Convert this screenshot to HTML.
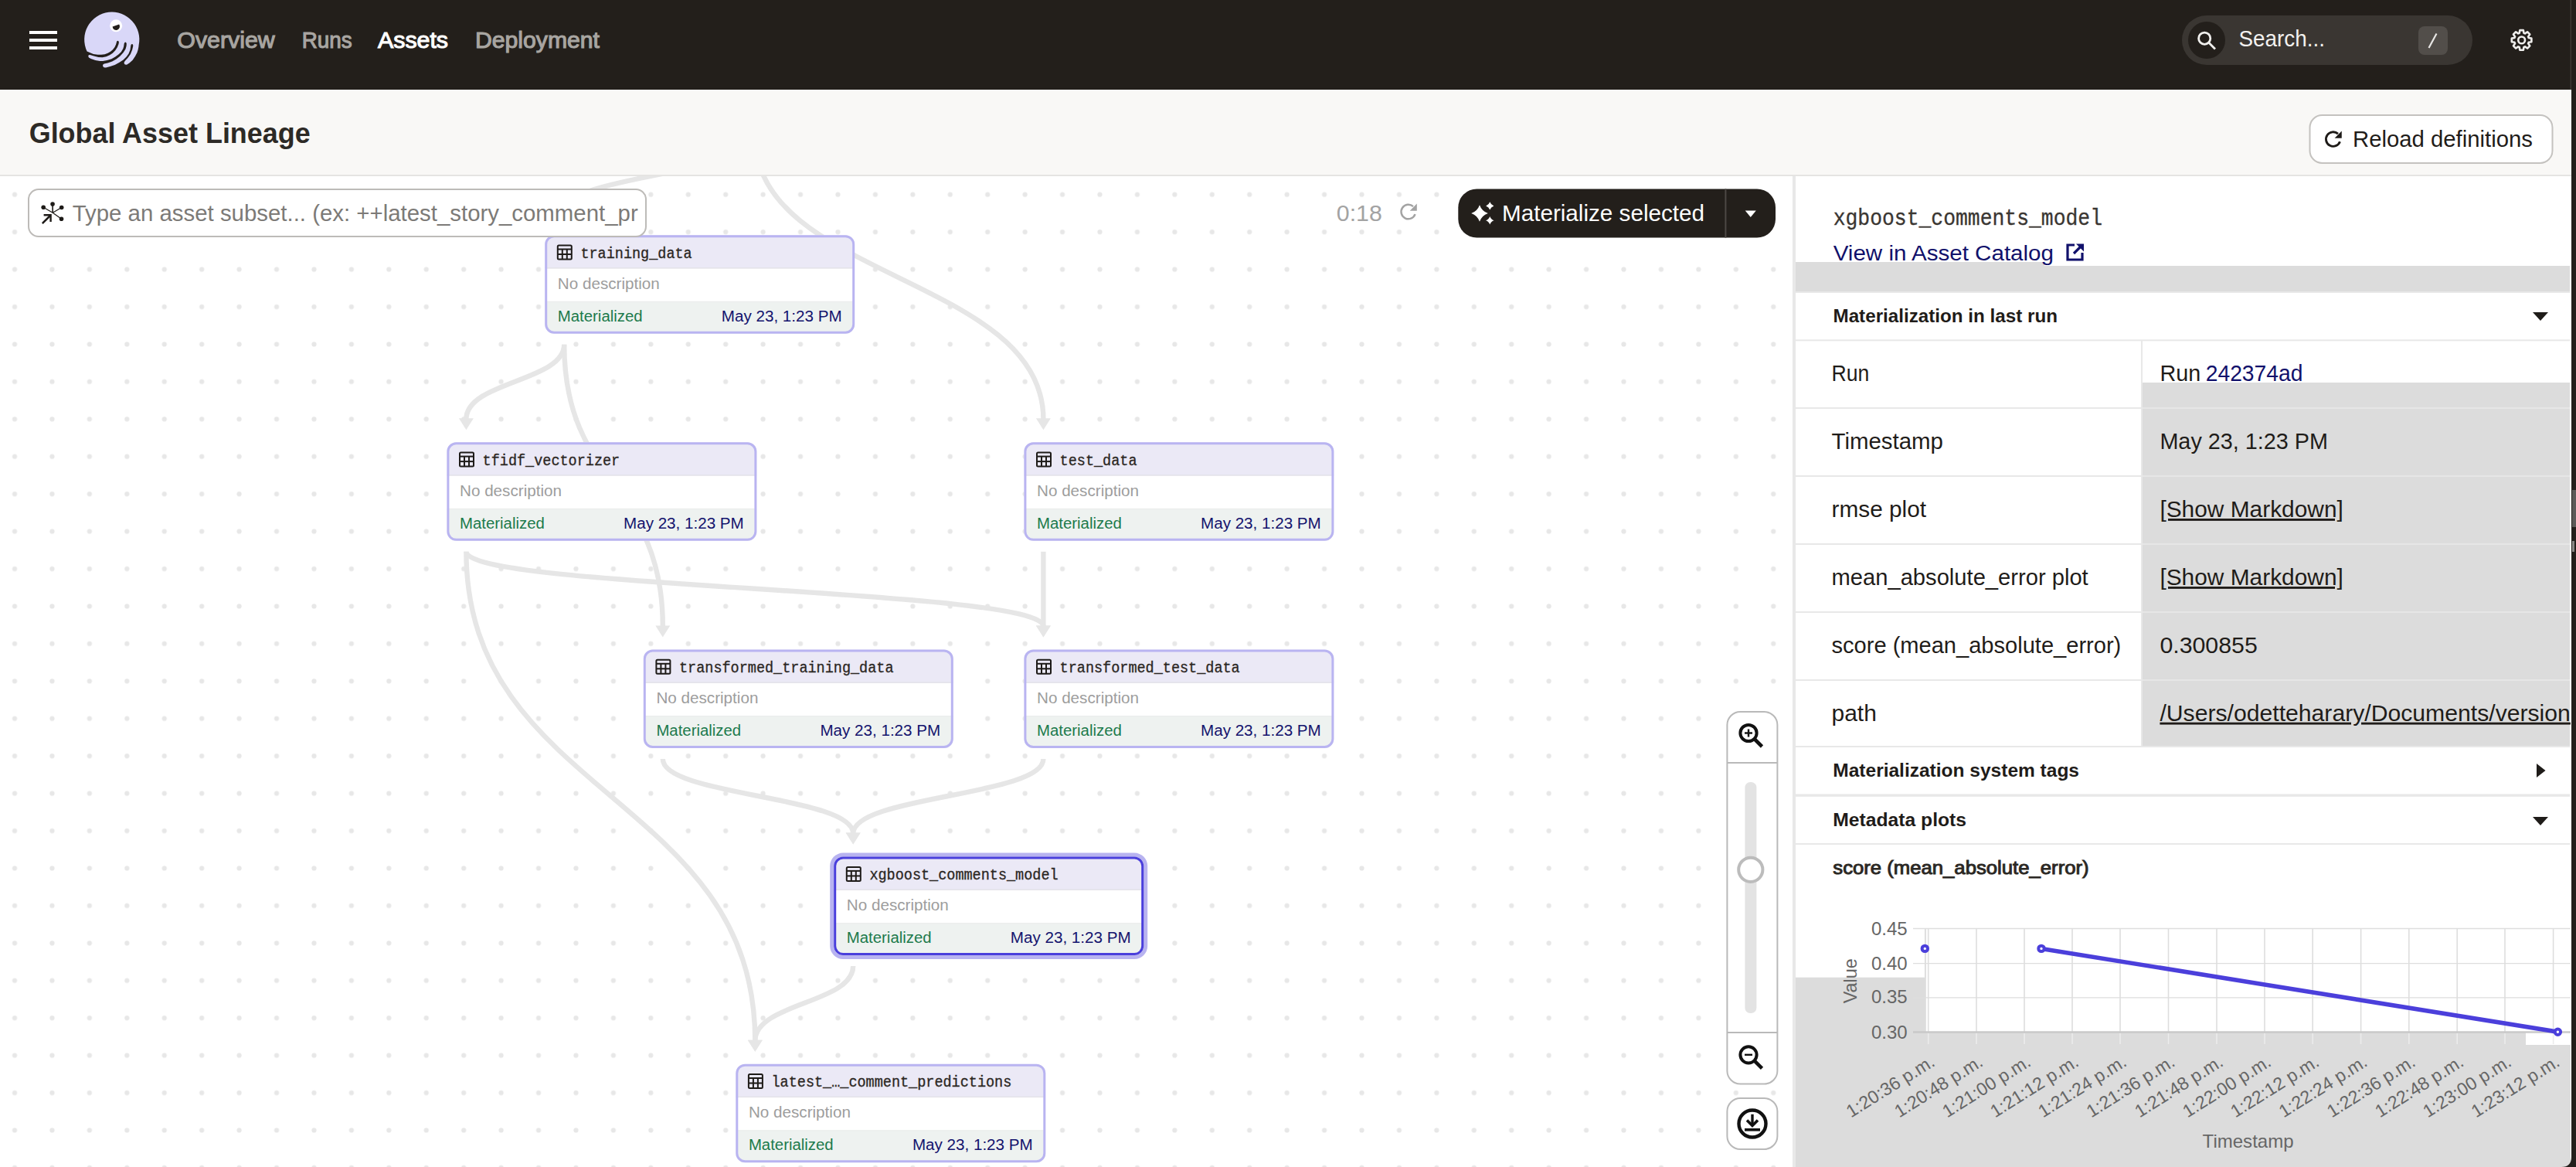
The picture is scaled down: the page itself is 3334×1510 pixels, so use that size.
<!DOCTYPE html><html><head><meta charset="utf-8"><title>Global Asset Lineage</title>
<style>html,body{margin:0;padding:0;background:#fff;overflow:hidden;width:3334px;height:1510px}svg{display:block}text{white-space:pre}</style></head><body>
<svg width="3334" height="1510" viewBox="0 0 3334 1510">
<defs>
<pattern id="dots" patternUnits="userSpaceOnUse" x="-5.2" y="227.6" width="48.43" height="48.43"><circle cx="24.2" cy="24.2" r="3.1" fill="#e7e7e7"/></pattern>
</defs>
<rect x="0.00" y="228.00" width="2320.00" height="1282.00" rx="0" fill="#ffffff" />
<rect x="0.00" y="228.00" width="2320.00" height="1282.00" rx="0" fill="url(#dots)" />
<path d="M977.3,177.6 C977.3,225.4 730.2,225.4 730.2,274.2" fill="none" stroke="#e6e6e6" stroke-width="6.4"/>
<path d="M720.7,273.2 L739.7,273.2 L730.2,288.2 Z" fill="#e6e6e6"/>
<path d="M977.3,177.6 C977.3,359.4 1350.4,359.4 1350.4,542.3" fill="none" stroke="#e6e6e6" stroke-width="6.4"/>
<path d="M1340.9,541.3 L1359.9,541.3 L1350.4,556.3 Z" fill="#e6e6e6"/>
<path d="M730.2,445.7 C730.2,493.5 603.4,493.5 603.4,542.3" fill="none" stroke="#e6e6e6" stroke-width="6.4"/>
<path d="M593.9,541.3 L612.9,541.3 L603.4,556.3 Z" fill="#e6e6e6"/>
<path d="M730.2,445.7 C730.2,627.6 857.8,627.6 857.8,810.5" fill="none" stroke="#e6e6e6" stroke-width="6.4"/>
<path d="M848.3,809.5 L867.3,809.5 L857.8,824.5 Z" fill="#e6e6e6"/>
<path d="M603.4,713.8 C603.4,761.6 1350.4,761.6 1350.4,810.5" fill="none" stroke="#e6e6e6" stroke-width="6.4"/>
<path d="M1340.9,809.5 L1359.9,809.5 L1350.4,824.5 Z" fill="#e6e6e6"/>
<path d="M603.4,713.8 C603.4,1029.8 977.3,1029.8 977.3,1346.7" fill="none" stroke="#e6e6e6" stroke-width="6.4"/>
<path d="M967.8,1345.7 L986.8,1345.7 L977.3,1360.7 Z" fill="#e6e6e6"/>
<path d="M1350.4,713.8 C1350.4,761.6 1350.4,761.6 1350.4,810.5" fill="none" stroke="#e6e6e6" stroke-width="6.4"/>
<path d="M1340.9,809.5 L1359.9,809.5 L1350.4,824.5 Z" fill="#e6e6e6"/>
<path d="M857.8,982.0 C857.8,1029.8 1104.2,1029.8 1104.2,1078.6" fill="none" stroke="#e6e6e6" stroke-width="6.4"/>
<path d="M1094.7,1077.6 L1113.7,1077.6 L1104.2,1092.6 Z" fill="#e6e6e6"/>
<path d="M1350.4,982.0 C1350.4,1029.8 1104.2,1029.8 1104.2,1078.6" fill="none" stroke="#e6e6e6" stroke-width="6.4"/>
<path d="M1094.7,1077.6 L1113.7,1077.6 L1104.2,1092.6 Z" fill="#e6e6e6"/>
<path d="M1104.2,1250.1 C1104.2,1297.9 977.3,1297.9 977.3,1346.7" fill="none" stroke="#e6e6e6" stroke-width="6.4"/>
<path d="M967.8,1345.7 L986.8,1345.7 L977.3,1360.7 Z" fill="#e6e6e6"/>
<clipPath id="nc1"><rect x="705.2" y="304.2" width="401" height="127.5" rx="12"/></clipPath>
<g clip-path="url(#nc1)">
<rect x="705.20" y="304.20" width="401.00" height="127.50" rx="0" fill="#ffffff" />
<rect x="705.20" y="304.20" width="401.00" height="43.00" rx="0" fill="#ebe9f6" />
<rect x="705.20" y="346.00" width="401.00" height="1.60" rx="0" fill="#e4e3ea" />
<rect x="705.20" y="390.20" width="401.00" height="41.50" rx="0" fill="#eef2f0" />
<rect x="705.20" y="389.80" width="401.00" height="1.00" rx="0" fill="#e9ecea" />
</g>
<rect x="706.7" y="305.7" width="398" height="124.5" rx="10.5" fill="none" stroke="#b9b4f1" stroke-width="3"/>
<g fill="none" stroke="#1e1b18" stroke-width="2"><rect x="721.8" y="317.5" width="18" height="18" rx="1.5"/><line x1="721.8" y1="322.5" x2="739.8" y2="322.5"/><line x1="721.8" y1="329.0" x2="739.8" y2="329.0"/><line x1="727.8" y1="322.5" x2="727.8" y2="335.5"/><line x1="733.8" y1="322.5" x2="733.8" y2="335.5"/></g>
<text x="751.4" y="333.8" font-family="Liberation Mono" font-size="18.50" font-weight="normal" fill="#2b2723" text-anchor="start" textLength="144.3" lengthAdjust="spacingAndGlyphs"  transform="matrix(1 0 0 1.13 0 -43.394)" stroke="#2b2723" stroke-width="0.3">training_data</text>
<text x="721.8" y="373.9" font-family="Liberation Sans" font-size="19.60" font-weight="normal" fill="#9d9d9d" text-anchor="start" textLength="132.0" lengthAdjust="spacingAndGlyphs" >No description</text>
<text x="721.8" y="415.7" font-family="Liberation Sans" font-size="19.60" font-weight="normal" fill="#1c7a4c" text-anchor="start" textLength="109.8" lengthAdjust="spacingAndGlyphs" >Materialized</text>
<text x="933.8" y="415.7" font-family="Liberation Sans" font-size="19.60" font-weight="normal" fill="#14146e" text-anchor="start" textLength="155.8" lengthAdjust="spacingAndGlyphs" >May 23, 1:23 PM</text>
<clipPath id="nc2"><rect x="578.4" y="572.3" width="401" height="127.5" rx="12"/></clipPath>
<g clip-path="url(#nc2)">
<rect x="578.40" y="572.30" width="401.00" height="127.50" rx="0" fill="#ffffff" />
<rect x="578.40" y="572.30" width="401.00" height="43.00" rx="0" fill="#ebe9f6" />
<rect x="578.40" y="614.10" width="401.00" height="1.60" rx="0" fill="#e4e3ea" />
<rect x="578.40" y="658.30" width="401.00" height="41.50" rx="0" fill="#eef2f0" />
<rect x="578.40" y="657.90" width="401.00" height="1.00" rx="0" fill="#e9ecea" />
</g>
<rect x="579.9" y="573.8" width="398" height="124.5" rx="10.5" fill="none" stroke="#b9b4f1" stroke-width="3"/>
<g fill="none" stroke="#1e1b18" stroke-width="2"><rect x="595.0" y="585.6" width="18" height="18" rx="1.5"/><line x1="595.0" y1="590.6" x2="613.0" y2="590.6"/><line x1="595.0" y1="597.1" x2="613.0" y2="597.1"/><line x1="601.0" y1="590.6" x2="601.0" y2="603.6"/><line x1="607.0" y1="590.6" x2="607.0" y2="603.6"/></g>
<text x="624.6" y="601.9" font-family="Liberation Mono" font-size="18.50" font-weight="normal" fill="#2b2723" text-anchor="start" textLength="177.6" lengthAdjust="spacingAndGlyphs"  transform="matrix(1 0 0 1.13 0 -78.247)" stroke="#2b2723" stroke-width="0.3">tfidf_vectorizer</text>
<text x="595.0" y="642.0" font-family="Liberation Sans" font-size="19.60" font-weight="normal" fill="#9d9d9d" text-anchor="start" textLength="132.0" lengthAdjust="spacingAndGlyphs" >No description</text>
<text x="595.0" y="683.8" font-family="Liberation Sans" font-size="19.60" font-weight="normal" fill="#1c7a4c" text-anchor="start" textLength="109.8" lengthAdjust="spacingAndGlyphs" >Materialized</text>
<text x="807.0" y="683.8" font-family="Liberation Sans" font-size="19.60" font-weight="normal" fill="#14146e" text-anchor="start" textLength="155.8" lengthAdjust="spacingAndGlyphs" >May 23, 1:23 PM</text>
<clipPath id="nc3"><rect x="1325.4" y="572.3" width="401" height="127.5" rx="12"/></clipPath>
<g clip-path="url(#nc3)">
<rect x="1325.40" y="572.30" width="401.00" height="127.50" rx="0" fill="#ffffff" />
<rect x="1325.40" y="572.30" width="401.00" height="43.00" rx="0" fill="#ebe9f6" />
<rect x="1325.40" y="614.10" width="401.00" height="1.60" rx="0" fill="#e4e3ea" />
<rect x="1325.40" y="658.30" width="401.00" height="41.50" rx="0" fill="#eef2f0" />
<rect x="1325.40" y="657.90" width="401.00" height="1.00" rx="0" fill="#e9ecea" />
</g>
<rect x="1326.9" y="573.8" width="398" height="124.5" rx="10.5" fill="none" stroke="#b9b4f1" stroke-width="3"/>
<g fill="none" stroke="#1e1b18" stroke-width="2"><rect x="1342.0" y="585.6" width="18" height="18" rx="1.5"/><line x1="1342.0" y1="590.6" x2="1360.0" y2="590.6"/><line x1="1342.0" y1="597.1" x2="1360.0" y2="597.1"/><line x1="1348.0" y1="590.6" x2="1348.0" y2="603.6"/><line x1="1354.0" y1="590.6" x2="1354.0" y2="603.6"/></g>
<text x="1371.6" y="601.9" font-family="Liberation Mono" font-size="18.50" font-weight="normal" fill="#2b2723" text-anchor="start" textLength="99.9" lengthAdjust="spacingAndGlyphs"  transform="matrix(1 0 0 1.13 0 -78.247)" stroke="#2b2723" stroke-width="0.3">test_data</text>
<text x="1342.0" y="642.0" font-family="Liberation Sans" font-size="19.60" font-weight="normal" fill="#9d9d9d" text-anchor="start" textLength="132.0" lengthAdjust="spacingAndGlyphs" >No description</text>
<text x="1342.0" y="683.8" font-family="Liberation Sans" font-size="19.60" font-weight="normal" fill="#1c7a4c" text-anchor="start" textLength="109.8" lengthAdjust="spacingAndGlyphs" >Materialized</text>
<text x="1554.0" y="683.8" font-family="Liberation Sans" font-size="19.60" font-weight="normal" fill="#14146e" text-anchor="start" textLength="155.8" lengthAdjust="spacingAndGlyphs" >May 23, 1:23 PM</text>
<clipPath id="nc4"><rect x="832.8" y="840.5" width="401" height="127.5" rx="12"/></clipPath>
<g clip-path="url(#nc4)">
<rect x="832.80" y="840.50" width="401.00" height="127.50" rx="0" fill="#ffffff" />
<rect x="832.80" y="840.50" width="401.00" height="43.00" rx="0" fill="#ebe9f6" />
<rect x="832.80" y="882.30" width="401.00" height="1.60" rx="0" fill="#e4e3ea" />
<rect x="832.80" y="926.50" width="401.00" height="41.50" rx="0" fill="#eef2f0" />
<rect x="832.80" y="926.10" width="401.00" height="1.00" rx="0" fill="#e9ecea" />
</g>
<rect x="834.3" y="842.0" width="398" height="124.5" rx="10.5" fill="none" stroke="#b9b4f1" stroke-width="3"/>
<g fill="none" stroke="#1e1b18" stroke-width="2"><rect x="849.4" y="853.8" width="18" height="18" rx="1.5"/><line x1="849.4" y1="858.8" x2="867.4" y2="858.8"/><line x1="849.4" y1="865.3" x2="867.4" y2="865.3"/><line x1="855.4" y1="858.8" x2="855.4" y2="871.8"/><line x1="861.4" y1="858.8" x2="861.4" y2="871.8"/></g>
<text x="879.0" y="870.1" font-family="Liberation Mono" font-size="18.50" font-weight="normal" fill="#2b2723" text-anchor="start" textLength="277.5" lengthAdjust="spacingAndGlyphs"  transform="matrix(1 0 0 1.13 0 -113.113)" stroke="#2b2723" stroke-width="0.3">transformed_training_data</text>
<text x="849.4" y="910.2" font-family="Liberation Sans" font-size="19.60" font-weight="normal" fill="#9d9d9d" text-anchor="start" textLength="132.0" lengthAdjust="spacingAndGlyphs" >No description</text>
<text x="849.4" y="952.0" font-family="Liberation Sans" font-size="19.60" font-weight="normal" fill="#1c7a4c" text-anchor="start" textLength="109.8" lengthAdjust="spacingAndGlyphs" >Materialized</text>
<text x="1061.4" y="952.0" font-family="Liberation Sans" font-size="19.60" font-weight="normal" fill="#14146e" text-anchor="start" textLength="155.8" lengthAdjust="spacingAndGlyphs" >May 23, 1:23 PM</text>
<clipPath id="nc5"><rect x="1325.4" y="840.5" width="401" height="127.5" rx="12"/></clipPath>
<g clip-path="url(#nc5)">
<rect x="1325.40" y="840.50" width="401.00" height="127.50" rx="0" fill="#ffffff" />
<rect x="1325.40" y="840.50" width="401.00" height="43.00" rx="0" fill="#ebe9f6" />
<rect x="1325.40" y="882.30" width="401.00" height="1.60" rx="0" fill="#e4e3ea" />
<rect x="1325.40" y="926.50" width="401.00" height="41.50" rx="0" fill="#eef2f0" />
<rect x="1325.40" y="926.10" width="401.00" height="1.00" rx="0" fill="#e9ecea" />
</g>
<rect x="1326.9" y="842.0" width="398" height="124.5" rx="10.5" fill="none" stroke="#b9b4f1" stroke-width="3"/>
<g fill="none" stroke="#1e1b18" stroke-width="2"><rect x="1342.0" y="853.8" width="18" height="18" rx="1.5"/><line x1="1342.0" y1="858.8" x2="1360.0" y2="858.8"/><line x1="1342.0" y1="865.3" x2="1360.0" y2="865.3"/><line x1="1348.0" y1="858.8" x2="1348.0" y2="871.8"/><line x1="1354.0" y1="858.8" x2="1354.0" y2="871.8"/></g>
<text x="1371.6" y="870.1" font-family="Liberation Mono" font-size="18.50" font-weight="normal" fill="#2b2723" text-anchor="start" textLength="233.1" lengthAdjust="spacingAndGlyphs"  transform="matrix(1 0 0 1.13 0 -113.113)" stroke="#2b2723" stroke-width="0.3">transformed_test_data</text>
<text x="1342.0" y="910.2" font-family="Liberation Sans" font-size="19.60" font-weight="normal" fill="#9d9d9d" text-anchor="start" textLength="132.0" lengthAdjust="spacingAndGlyphs" >No description</text>
<text x="1342.0" y="952.0" font-family="Liberation Sans" font-size="19.60" font-weight="normal" fill="#1c7a4c" text-anchor="start" textLength="109.8" lengthAdjust="spacingAndGlyphs" >Materialized</text>
<text x="1554.0" y="952.0" font-family="Liberation Sans" font-size="19.60" font-weight="normal" fill="#14146e" text-anchor="start" textLength="155.8" lengthAdjust="spacingAndGlyphs" >May 23, 1:23 PM</text>
<clipPath id="nc6"><rect x="1079.2" y="1108.6" width="401" height="127.5" rx="12"/></clipPath>
<rect x="1074.2" y="1103.6" width="411" height="137.5" rx="17" fill="#b8b3f0"/>
<g clip-path="url(#nc6)">
<rect x="1079.20" y="1108.60" width="401.00" height="127.50" rx="0" fill="#ffffff" />
<rect x="1079.20" y="1108.60" width="401.00" height="43.00" rx="0" fill="#ebe9f6" />
<rect x="1079.20" y="1150.40" width="401.00" height="1.60" rx="0" fill="#e4e3ea" />
<rect x="1079.20" y="1194.60" width="401.00" height="41.50" rx="0" fill="#eef2f0" />
<rect x="1079.20" y="1194.20" width="401.00" height="1.00" rx="0" fill="#e9ecea" />
</g>
<rect x="1080.7" y="1110.1" width="398" height="124.5" rx="10.5" fill="none" stroke="#4a3fdc" stroke-width="3"/>
<g fill="none" stroke="#1e1b18" stroke-width="2"><rect x="1095.8" y="1121.9" width="18" height="18" rx="1.5"/><line x1="1095.8" y1="1126.9" x2="1113.8" y2="1126.9"/><line x1="1095.8" y1="1133.4" x2="1113.8" y2="1133.4"/><line x1="1101.8" y1="1126.9" x2="1101.8" y2="1139.9"/><line x1="1107.8" y1="1126.9" x2="1107.8" y2="1139.9"/></g>
<text x="1125.4" y="1138.2" font-family="Liberation Mono" font-size="18.50" font-weight="normal" fill="#2b2723" text-anchor="start" textLength="244.2" lengthAdjust="spacingAndGlyphs"  transform="matrix(1 0 0 1.13 0 -147.966)" stroke="#2b2723" stroke-width="0.3">xgboost_comments_model</text>
<text x="1095.8" y="1178.3" font-family="Liberation Sans" font-size="19.60" font-weight="normal" fill="#9d9d9d" text-anchor="start" textLength="132.0" lengthAdjust="spacingAndGlyphs" >No description</text>
<text x="1095.8" y="1220.1" font-family="Liberation Sans" font-size="19.60" font-weight="normal" fill="#1c7a4c" text-anchor="start" textLength="109.8" lengthAdjust="spacingAndGlyphs" >Materialized</text>
<text x="1307.8" y="1220.1" font-family="Liberation Sans" font-size="19.60" font-weight="normal" fill="#14146e" text-anchor="start" textLength="155.8" lengthAdjust="spacingAndGlyphs" >May 23, 1:23 PM</text>
<clipPath id="nc7"><rect x="952.3" y="1376.7" width="401" height="127.5" rx="12"/></clipPath>
<g clip-path="url(#nc7)">
<rect x="952.30" y="1376.70" width="401.00" height="127.50" rx="0" fill="#ffffff" />
<rect x="952.30" y="1376.70" width="401.00" height="43.00" rx="0" fill="#ebe9f6" />
<rect x="952.30" y="1418.50" width="401.00" height="1.60" rx="0" fill="#e4e3ea" />
<rect x="952.30" y="1462.70" width="401.00" height="41.50" rx="0" fill="#eef2f0" />
<rect x="952.30" y="1462.30" width="401.00" height="1.00" rx="0" fill="#e9ecea" />
</g>
<rect x="953.8" y="1378.2" width="398" height="124.5" rx="10.5" fill="none" stroke="#b9b4f1" stroke-width="3"/>
<g fill="none" stroke="#1e1b18" stroke-width="2"><rect x="968.9" y="1390.0" width="18" height="18" rx="1.5"/><line x1="968.9" y1="1395.0" x2="986.9" y2="1395.0"/><line x1="968.9" y1="1401.5" x2="986.9" y2="1401.5"/><line x1="974.9" y1="1395.0" x2="974.9" y2="1408.0"/><line x1="980.9" y1="1395.0" x2="980.9" y2="1408.0"/></g>
<text x="998.5" y="1406.3" font-family="Liberation Mono" font-size="18.50" font-weight="normal" fill="#2b2723" text-anchor="start" textLength="310.8" lengthAdjust="spacingAndGlyphs"  transform="matrix(1 0 0 1.13 0 -182.819)" stroke="#2b2723" stroke-width="0.3">latest_…_comment_predictions</text>
<text x="968.9" y="1446.4" font-family="Liberation Sans" font-size="19.60" font-weight="normal" fill="#9d9d9d" text-anchor="start" textLength="132.0" lengthAdjust="spacingAndGlyphs" >No description</text>
<text x="968.9" y="1488.2" font-family="Liberation Sans" font-size="19.60" font-weight="normal" fill="#1c7a4c" text-anchor="start" textLength="109.8" lengthAdjust="spacingAndGlyphs" >Materialized</text>
<text x="1180.9" y="1488.2" font-family="Liberation Sans" font-size="19.60" font-weight="normal" fill="#14146e" text-anchor="start" textLength="155.8" lengthAdjust="spacingAndGlyphs" >May 23, 1:23 PM</text>
<filter id="insh" x="-5%" y="-20%" width="110%" height="140%"><feOffset dy="2"/><feGaussianBlur stdDeviation="1.5"/></filter>
<rect x="37.00" y="245.00" width="799.00" height="61.00" rx="13" fill="#ffffff" stroke="#bdbbb8" stroke-width="2" />
<g stroke="#1e1b18" fill="#1e1b18"><line x1="68.2" y1="275.2" x2="68.05" y2="264" stroke-width="1.6"/><line x1="68.2" y1="275.2" x2="56.2" y2="268.3" stroke-width="1.3"/><line x1="68.2" y1="275.2" x2="79.7" y2="268.5" stroke-width="1.3"/><line x1="68.2" y1="275.2" x2="79.5" y2="283.2" stroke-width="1.3"/><circle cx="68.05" cy="264.1" r="2.8" stroke="none"/><circle cx="56.2" cy="268.3" r="2.8" stroke="none"/><circle cx="79.7" cy="268.5" r="2.8" stroke="none"/><circle cx="79.5" cy="283.2" r="2.8" stroke="none"/><line x1="54.8" y1="289.2" x2="65" y2="279" stroke-width="2.5"/><path d="M56.6,278.2 L65.6,278.2 L65.6,287" fill="none" stroke-width="2.4"/></g>
<text x="93.7" y="286.3" font-family="Liberation Sans" font-size="29.50" font-weight="normal" fill="#7c7a77" text-anchor="start" textLength="732.0" lengthAdjust="spacingAndGlyphs" >Type an asset subset... (ex: ++latest_story_comment_pr</text>
<text x="1729.8" y="286.0" font-family="Liberation Sans" font-size="28.60" font-weight="normal" fill="#a3a3a3" text-anchor="start" textLength="59.0" lengthAdjust="spacingAndGlyphs" >0:18</text>
<path d="M1831.54,277.18 A9.3,9.3 0 1 1 1829.02,267.09" fill="none" stroke="#a3a3a3" stroke-width="2.5"/>
<path d="M1824.70,272.70 L1833.80,272.70 L1833.80,263.40 Z" fill="#a3a3a3"/>
<rect x="1866.00" y="228.00" width="454.00" height="96.00" rx="0" fill="#ffffff" />
<rect x="1887.30" y="244.40" width="410.70" height="63.20" rx="24" fill="#231f1b" />
<rect x="2232.40" y="244.40" width="2.00" height="63.20" rx="0" fill="#4d4844" />
<path d="M1915,265.2 Q1917.808,273.192 1925.8,276 Q1917.808,278.808 1915,286.8 Q1912.192,278.808 1904.2,276 Q1912.192,273.192 1915,265.2 Z" fill="#ffffff"/>
<path d="M1928.3,261.29999999999995 Q1929.626,265.07399999999996 1933.3999999999999,266.4 Q1929.626,267.726 1928.3,271.5 Q1926.974,267.726 1923.2,266.4 Q1926.974,265.07399999999996 1928.3,261.29999999999995 Z" fill="#ffffff"/>
<path d="M1928.3,279.9 Q1929.6779999999999,283.822 1933.6,285.2 Q1929.6779999999999,286.578 1928.3,290.5 Q1926.922,286.578 1923.0,285.2 Q1926.922,283.822 1928.3,279.9 Z" fill="#ffffff"/>
<text x="1944.0" y="286.0" font-family="Liberation Sans" font-size="28.60" font-weight="normal" fill="#ffffff" text-anchor="start" textLength="262.0" lengthAdjust="spacingAndGlyphs" >Materialize selected</text>
<path d="M2258.7,272.6 L2272.8,272.6 L2265.75,281 Z" fill="#ffffff"/>
<rect x="2235.40" y="921.00" width="65.00" height="481.50" rx="17" fill="#ffffff" stroke="#b9b9b9" stroke-width="2" />
<rect x="2235.40" y="986.00" width="65.00" height="2.00" rx="0" fill="#b9b9b9" />
<rect x="2235.40" y="1335.00" width="65.00" height="2.00" rx="0" fill="#b9b9b9" />
<rect x="2258.40" y="1012.00" width="15.00" height="299.00" rx="7" fill="#e3e3e3" />
<circle cx="2265.8" cy="1125.3" r="15.6" fill="#ffffff" stroke="#bcbcbc" stroke-width="4"/>
<g fill="none" stroke="#111" stroke-width="4"><circle cx="2263" cy="948.5" r="10.6"/><line x1="2271" y1="956.5" x2="2280.5" y2="966.0" stroke-width="4.6"/></g>
<line x1="2258" y1="948.5" x2="2268" y2="948.5" stroke="#111" stroke-width="2.4"/>
<line x1="2263" y1="943.5" x2="2263" y2="953.5" stroke="#111" stroke-width="2.4"/>
<g fill="none" stroke="#111" stroke-width="4"><circle cx="2263" cy="1364.8" r="10.6"/><line x1="2271" y1="1372.8" x2="2280.5" y2="1382.3" stroke-width="4.6"/></g>
<line x1="2258" y1="1364.8" x2="2268" y2="1364.8" stroke="#111" stroke-width="2.4"/>
<rect x="2235.40" y="1421.00" width="65.00" height="66.00" rx="17" fill="#ffffff" stroke="#b9b9b9" stroke-width="2" />
<circle cx="2268" cy="1454" r="17.5" fill="none" stroke="#111" stroke-width="4.4"/>
<path d="M2268,1441.8 L2268,1456.5" stroke="#111" stroke-width="3.4"/><path d="M2261,1449.5 L2268,1456.5 L2275,1449.5" fill="none" stroke="#111" stroke-width="3.6"/><rect x="2258" y="1460" width="20" height="3.6" fill="#111"/>
<rect x="0.00" y="0.00" width="3334.00" height="116.00" rx="0" fill="#231f1b" />
<rect x="38.00" y="40.00" width="36.00" height="4.00" rx="0" fill="#ffffff" />
<rect x="38.00" y="50.00" width="36.00" height="4.00" rx="0" fill="#ffffff" />
<rect x="38.00" y="60.00" width="36.00" height="4.00" rx="0" fill="#ffffff" />
<path d="M115.6,67.8 L112.6,66.5 A35.6,35.6 0 1 1 179.6,58.5 L179.4,60.4 L178.6,64.5 L177.5,68.1 L175,72.8 L171.7,77.8 L167.5,81.5 L164,83.8 L161.8,83.6 L160.6,82 L160.8,80.2 L162.3,78.3 L165.5,74.8 L168.9,70 L171.1,64.6 L172.3,59.5 L172,57.5 L170.9,57 L169.8,57.6 L169.3,59 L168.5,64.4 L166.5,69.5 L163.6,73.6 L159.5,77.4 L154.5,80.8 L148.6,83.9 L142.5,86 L137,87.4 L134.5,87.2 L133,85.6 L133.3,83.6 L134.8,82.6 L139.5,81.5 L145.2,79.4 L150.5,76.5 L155.3,72.8 L159.6,68 L162.5,63.6 L163.6,59.6 L163.8,56.5 L163.2,55 L162.2,54.6 L161.2,55.2 L160.7,56.5 L160.2,60 L159.3,63 L156.8,67.2 L153.3,70.6 L149.2,73.6 L144.4,76.2 L138.5,78 L133,79 L129.3,79.1 L123.5,78.1 L117.7,76 L115,74.6 L114.2,72.8 L114.8,71.3 L116.4,70.9 L121.5,72.6 L127.4,74 L132.5,74.2 L137.5,73.2 L142,71.3 L145.8,68.8 L149.2,65.2 L151.8,61.2 L153.5,57 L153.9,54.5 L153.4,53.2 L152.4,52.8 L151.3,53.3 L150.9,54.4 L150.1,57.5 L148.5,61 L146,64.3 L143,66.8 L139.5,68.8 L135.5,70.2 L131,70.8 L126.5,70.8 L121,69.9 Z" fill="#d9d7f8"/>
<circle cx="150.2" cy="33.3" r="8" fill="#ffffff"/>
<path d="M145.6,34.6 L154.2,31.6 A4.7,4.7 0 1 1 145.6,34.6 Z" fill="#231f1b"/>

<text x="229.3" y="62.1" font-family="Liberation Sans" font-size="29.00" font-weight="normal" fill="#a8a5a1" text-anchor="start" textLength="126.4" lengthAdjust="spacingAndGlyphs"  stroke="#a8a5a1" stroke-width="1.1">Overview</text>
<text x="390.8" y="62.1" font-family="Liberation Sans" font-size="29.00" font-weight="normal" fill="#a8a5a1" text-anchor="start" textLength="64.9" lengthAdjust="spacingAndGlyphs"  stroke="#a8a5a1" stroke-width="1.1">Runs</text>
<text x="489.0" y="62.1" font-family="Liberation Sans" font-size="29.00" font-weight="normal" fill="#ffffff" text-anchor="start" textLength="91.0" lengthAdjust="spacingAndGlyphs"  stroke="#ffffff" stroke-width="1.1">Assets</text>
<text x="615.0" y="62.1" font-family="Liberation Sans" font-size="29.00" font-weight="normal" fill="#a8a5a1" text-anchor="start" textLength="161.0" lengthAdjust="spacingAndGlyphs"  stroke="#a8a5a1" stroke-width="1.1">Deployment</text>
<rect x="2824.00" y="20.00" width="376.00" height="64.00" rx="32" fill="#3a3632" />
<circle cx="2856" cy="52" r="24" fill="#231f1b"/>
<g fill="none" stroke="#f0efed" stroke-width="2.8"><circle cx="2853.2" cy="49.7" r="7.6"/><line x1="2858.8" y1="55.3" x2="2866" y2="62.5" stroke-linecap="square"/></g>
<text x="2897.5" y="59.8" font-family="Liberation Sans" font-size="28.60" font-weight="normal" fill="#f2f1ef" text-anchor="start" textLength="111.5" lengthAdjust="spacingAndGlyphs" >Search...</text>
<rect x="3130.00" y="34.00" width="38.00" height="37.00" rx="8" fill="#524e4a" />
<line x1="3143.5" y1="62" x2="3153.5" y2="43.5" stroke="#e8e7e5" stroke-width="2.2"/>
<polygon points="3260.71,42.74 3261.34,39.10 3265.86,39.10 3266.49,42.74 3268.03,43.38 3271.06,41.25 3274.25,44.44 3272.12,47.47 3272.76,49.01 3276.40,49.64 3276.40,54.16 3272.76,54.79 3272.12,56.33 3274.25,59.36 3271.06,62.55 3268.03,60.42 3266.49,61.06 3265.86,64.70 3261.34,64.70 3260.71,61.06 3259.17,60.42 3256.14,62.55 3252.95,59.36 3255.08,56.33 3254.44,54.79 3250.80,54.16 3250.80,49.64 3254.44,49.01 3255.08,47.47 3252.95,44.44 3256.14,41.25 3259.17,43.38" fill="none" stroke="#efeeec" stroke-width="2.6" stroke-linejoin="round"/>
<circle cx="3263.6" cy="51.9" r="4.4" fill="none" stroke="#efeeec" stroke-width="2.6"/>
<rect x="0.00" y="116.00" width="3334.00" height="110.00" rx="0" fill="#f9f8f6" />
<rect x="0.00" y="226.00" width="3334.00" height="2.00" rx="0" fill="#e5e4e2" />
<text x="37.7" y="185.0" font-family="Liberation Sans" font-size="37.20" font-weight="bold" fill="#2d2a26" text-anchor="start" textLength="364.0" lengthAdjust="spacingAndGlyphs" >Global Asset Lineage</text>
<rect x="2989.50" y="149.00" width="314.00" height="62.00" rx="16" fill="#ffffff" stroke="#c4c2bf" stroke-width="2" />
<path d="M3028.49,183.23 A9.3,9.3 0 1 1 3025.97,173.14" fill="none" stroke="#1e1b18" stroke-width="2.9"/>
<path d="M3021.65,178.75 L3030.75,178.75 L3030.75,169.45 Z" fill="#1e1b18"/>
<text x="3045.0" y="190.0" font-family="Liberation Sans" font-size="29.00" font-weight="normal" fill="#1f1c19" text-anchor="start" textLength="233.0" lengthAdjust="spacingAndGlyphs" >Reload definitions</text>
<rect x="2320.00" y="228.00" width="4.00" height="1282.00" rx="0" fill="#e8e8e8" />
<rect x="2324.00" y="228.00" width="1004.00" height="1282.00" rx="0" fill="#ffffff" />
<rect x="2324.00" y="339.00" width="1002.00" height="38.00" rx="0" fill="#dcdcdc" />
<rect x="2646.00" y="339.00" width="680.00" height="5.00" rx="0" fill="#ffffff" />
<text x="2372.7" y="291.1" font-family="Liberation Mono" font-size="26.30" font-weight="normal" fill="#3a3632" text-anchor="start" textLength="348.3" lengthAdjust="spacingAndGlyphs"  transform="matrix(1 0 0 1.12 0 -34.932)" stroke="#3a3632" stroke-width="0.3">xgboost_comments_model</text>
<text x="2372.7" y="336.5" font-family="Liberation Sans" font-size="28.20" font-weight="normal" fill="#11116b" text-anchor="start" textLength="285.3" lengthAdjust="spacingAndGlyphs" >View in Asset Catalog</text>
<g fill="none" stroke="#11116b" stroke-width="3.2"><path d="M2685,317 L2676,317 L2676,336 L2695,336 L2695,327"/><line x1="2684" y1="328" x2="2694" y2="318"/></g>
<path d="M2687,315.5 L2697,315.5 L2697,325.5 Z" fill="#11116b"/>
<rect x="2324.00" y="377.00" width="1002.00" height="2.00" rx="0" fill="#e8e8e8" />
<text x="2372.5" y="417.0" font-family="Liberation Sans" font-size="24.80" font-weight="bold" fill="#1f1c19" text-anchor="start" textLength="290.5" lengthAdjust="spacingAndGlyphs" >Materialization in last run</text>
<path d="M3278,404 L3298,404 L3288,415 Z" fill="#1f1c19"/>
<rect x="2324.00" y="439.30" width="1002.00" height="2.00" rx="0" fill="#e8e8e8" />
<rect x="2773.00" y="495.00" width="553.00" height="471.00" rx="0" fill="#dcdcdc" />
<rect x="2771.00" y="440.00" width="2.00" height="526.00" rx="0" fill="#e8e8e8" />
<rect x="2324.00" y="527.00" width="447.00" height="2.00" rx="0" fill="#e8e8e8" />
<rect x="2773.00" y="527.00" width="553.00" height="2.00" rx="0" fill="#e6e6e6" />
<rect x="2324.00" y="615.00" width="447.00" height="2.00" rx="0" fill="#e8e8e8" />
<rect x="2773.00" y="615.00" width="553.00" height="2.00" rx="0" fill="#e6e6e6" />
<rect x="2324.00" y="703.00" width="447.00" height="2.00" rx="0" fill="#e8e8e8" />
<rect x="2773.00" y="703.00" width="553.00" height="2.00" rx="0" fill="#e6e6e6" />
<rect x="2324.00" y="791.00" width="447.00" height="2.00" rx="0" fill="#e8e8e8" />
<rect x="2773.00" y="791.00" width="553.00" height="2.00" rx="0" fill="#e6e6e6" />
<rect x="2324.00" y="879.00" width="447.00" height="2.00" rx="0" fill="#e8e8e8" />
<rect x="2773.00" y="879.00" width="553.00" height="2.00" rx="0" fill="#e6e6e6" />
<rect x="2324.00" y="965.00" width="1002.00" height="2.00" rx="0" fill="#e8e8e8" />
<text x="2370.5" y="493.2" font-family="Liberation Sans" font-size="28.80" font-weight="normal" fill="#1f1c19" text-anchor="start" textLength="48.8" lengthAdjust="spacingAndGlyphs" >Run</text>
<text x="2370.5" y="581.0" font-family="Liberation Sans" font-size="28.80" font-weight="normal" fill="#1f1c19" text-anchor="start" textLength="144.4" lengthAdjust="spacingAndGlyphs" >Timestamp</text>
<text x="2370.5" y="669.0" font-family="Liberation Sans" font-size="28.80" font-weight="normal" fill="#1f1c19" text-anchor="start" textLength="122.6" lengthAdjust="spacingAndGlyphs" >rmse plot</text>
<text x="2370.5" y="757.0" font-family="Liberation Sans" font-size="28.80" font-weight="normal" fill="#1f1c19" text-anchor="start" textLength="332.2" lengthAdjust="spacingAndGlyphs" >mean_absolute_error plot</text>
<text x="2370.5" y="844.8" font-family="Liberation Sans" font-size="28.80" font-weight="normal" fill="#1f1c19" text-anchor="start" textLength="374.8" lengthAdjust="spacingAndGlyphs" >score (mean_absolute_error)</text>
<text x="2370.5" y="932.7" font-family="Liberation Sans" font-size="28.80" font-weight="normal" fill="#1f1c19" text-anchor="start" textLength="58.3" lengthAdjust="spacingAndGlyphs" >path</text>
<text x="2795.4" y="493.2" font-family="Liberation Sans" font-size="28.80" font-weight="normal" fill="#1f1c19" text-anchor="start" >Run </text>
<text x="2854.7" y="493.2" font-family="Liberation Sans" font-size="28.80" font-weight="normal" fill="#11116b" text-anchor="start" textLength="125.8" lengthAdjust="spacingAndGlyphs" >242374ad</text>
<text x="2795.4" y="581.0" font-family="Liberation Sans" font-size="28.80" font-weight="normal" fill="#1f1c19" text-anchor="start" textLength="217.6" lengthAdjust="spacingAndGlyphs" >May 23, 1:23 PM</text>
<text x="2795.4" y="669.0" font-family="Liberation Sans" font-size="28.80" font-weight="normal" fill="#1f1c19" text-anchor="start" textLength="237.4" lengthAdjust="spacingAndGlyphs" text-decoration="underline">[Show Markdown]</text>
<text x="2795.4" y="757.0" font-family="Liberation Sans" font-size="28.80" font-weight="normal" fill="#1f1c19" text-anchor="start" textLength="237.4" lengthAdjust="spacingAndGlyphs" text-decoration="underline">[Show Markdown]</text>
<text x="2795.4" y="844.8" font-family="Liberation Sans" font-size="28.80" font-weight="normal" fill="#1f1c19" text-anchor="start" textLength="126.4" lengthAdjust="spacingAndGlyphs" >0.300855</text>
<clipPath id="pathclip"><rect x="2773" y="880" width="554" height="86"/></clipPath>
<g clip-path="url(#pathclip)">
<text x="2795.4" y="932.7" font-family="Liberation Sans" font-size="28.80" font-weight="normal" fill="#1f1c19" text-anchor="start" textLength="531.5" lengthAdjust="spacingAndGlyphs" text-decoration="underline">/Users/odetteharary/Documents/version</text>
</g>
<text x="2372.3" y="1005.4" font-family="Liberation Sans" font-size="24.80" font-weight="bold" fill="#1f1c19" text-anchor="start" textLength="318.7" lengthAdjust="spacingAndGlyphs" >Materialization system tags</text>
<path d="M3283,988 L3294.5,997 L3283,1006 Z" fill="#1f1c19"/>
<rect x="2324.00" y="1027.40" width="1002.00" height="3.40" rx="0" fill="#e8e8e8" />
<text x="2372.3" y="1068.8" font-family="Liberation Sans" font-size="24.80" font-weight="bold" fill="#1f1c19" text-anchor="start" textLength="172.7" lengthAdjust="spacingAndGlyphs" >Metadata plots</text>
<path d="M3278,1057 L3298,1057 L3288,1068 Z" fill="#1f1c19"/>
<rect x="2324.00" y="1091.00" width="1002.00" height="2.00" rx="0" fill="#e8e8e8" />
<text x="2372.3" y="1131.4" font-family="Liberation Sans" font-size="24.80" font-weight="normal" fill="#2b2824" text-anchor="start" textLength="331.3" lengthAdjust="spacingAndGlyphs"  stroke="#2b2824" stroke-width="1.0">score (mean_absolute_error)</text>
<rect x="2324.00" y="1264.70" width="167.00" height="245.30" rx="0" fill="#dcdcdc" />
<rect x="2491.00" y="1336.00" width="778.00" height="174.00" rx="0" fill="#dcdcdc" />
<rect x="3269.00" y="1352.00" width="58.00" height="158.00" rx="0" fill="#dcdcdc" />
<line x1="2476" y1="1201.5" x2="3327" y2="1201.5" stroke="#dedede" stroke-width="1.4"/>
<line x1="2476" y1="1246.6" x2="3327" y2="1246.6" stroke="#dedede" stroke-width="1.4"/>
<line x1="2476" y1="1290.9" x2="3327" y2="1290.9" stroke="#dedede" stroke-width="1.4"/>
<line x1="2495.7" y1="1201.5" x2="2495.7" y2="1336" stroke="#dedede" stroke-width="1.6"/>
<line x1="2495.7" y1="1337" x2="2495.7" y2="1351" stroke="#ececec" stroke-width="1.6"/>
<line x1="2558" y1="1201.5" x2="2558" y2="1336" stroke="#dedede" stroke-width="1.6"/>
<line x1="2558" y1="1337" x2="2558" y2="1351" stroke="#ececec" stroke-width="1.6"/>
<line x1="2620" y1="1201.5" x2="2620" y2="1336" stroke="#dedede" stroke-width="1.6"/>
<line x1="2620" y1="1337" x2="2620" y2="1351" stroke="#ececec" stroke-width="1.6"/>
<line x1="2682" y1="1201.5" x2="2682" y2="1336" stroke="#dedede" stroke-width="1.6"/>
<line x1="2682" y1="1337" x2="2682" y2="1351" stroke="#ececec" stroke-width="1.6"/>
<line x1="2744" y1="1201.5" x2="2744" y2="1336" stroke="#dedede" stroke-width="1.6"/>
<line x1="2744" y1="1337" x2="2744" y2="1351" stroke="#ececec" stroke-width="1.6"/>
<line x1="2806.5" y1="1201.5" x2="2806.5" y2="1336" stroke="#dedede" stroke-width="1.6"/>
<line x1="2806.5" y1="1337" x2="2806.5" y2="1351" stroke="#ececec" stroke-width="1.6"/>
<line x1="2869" y1="1201.5" x2="2869" y2="1336" stroke="#dedede" stroke-width="1.6"/>
<line x1="2869" y1="1337" x2="2869" y2="1351" stroke="#ececec" stroke-width="1.6"/>
<line x1="2931" y1="1201.5" x2="2931" y2="1336" stroke="#dedede" stroke-width="1.6"/>
<line x1="2931" y1="1337" x2="2931" y2="1351" stroke="#ececec" stroke-width="1.6"/>
<line x1="2993.2" y1="1201.5" x2="2993.2" y2="1336" stroke="#dedede" stroke-width="1.6"/>
<line x1="2993.2" y1="1337" x2="2993.2" y2="1351" stroke="#ececec" stroke-width="1.6"/>
<line x1="3055.6" y1="1201.5" x2="3055.6" y2="1336" stroke="#dedede" stroke-width="1.6"/>
<line x1="3055.6" y1="1337" x2="3055.6" y2="1351" stroke="#ececec" stroke-width="1.6"/>
<line x1="3117.8" y1="1201.5" x2="3117.8" y2="1336" stroke="#dedede" stroke-width="1.6"/>
<line x1="3117.8" y1="1337" x2="3117.8" y2="1351" stroke="#ececec" stroke-width="1.6"/>
<line x1="3180.2" y1="1201.5" x2="3180.2" y2="1336" stroke="#dedede" stroke-width="1.6"/>
<line x1="3180.2" y1="1337" x2="3180.2" y2="1351" stroke="#ececec" stroke-width="1.6"/>
<line x1="3242" y1="1201.5" x2="3242" y2="1336" stroke="#dedede" stroke-width="1.6"/>
<line x1="3242" y1="1337" x2="3242" y2="1351" stroke="#ececec" stroke-width="1.6"/>
<line x1="3304.6" y1="1201.5" x2="3304.6" y2="1336" stroke="#dedede" stroke-width="1.6"/>
<line x1="3304.6" y1="1337" x2="3304.6" y2="1351" stroke="#ececec" stroke-width="1.6"/>
<line x1="2491.9" y1="1201.5" x2="2491.9" y2="1336" stroke="#dedede" stroke-width="2"/>
<line x1="2476" y1="1335.5" x2="3327" y2="1335.5" stroke="#c9c9c9" stroke-width="2.4"/>
<text x="2468.6" y="1209.9" font-family="Liberation Sans" font-size="24.00" font-weight="normal" fill="#666666" text-anchor="end" >0.45</text>
<text x="2468.6" y="1254.5" font-family="Liberation Sans" font-size="24.00" font-weight="normal" fill="#666666" text-anchor="end" >0.40</text>
<text x="2468.6" y="1298.2" font-family="Liberation Sans" font-size="24.00" font-weight="normal" fill="#666666" text-anchor="end" >0.35</text>
<text x="2468.6" y="1344.0" font-family="Liberation Sans" font-size="24.00" font-weight="normal" fill="#666666" text-anchor="end" >0.30</text>
<text x="0" y="0" font-family="Liberation Sans" font-size="23.4" fill="#666666" text-anchor="middle" transform="translate(2402.5,1269.3) rotate(-90)">Value</text>
<text x="2850.6" y="1484.7" font-family="Liberation Sans" font-size="23.40" font-weight="normal" fill="#666666" text-anchor="start" textLength="118.0" lengthAdjust="spacingAndGlyphs" >Timestamp</text>
<text x="0" y="0" font-family="Liberation Sans" font-size="23.3" fill="#666666" text-anchor="end" transform="translate(2505.7,1378) rotate(-32)">1:20:36 p.m.</text>
<text x="0" y="0" font-family="Liberation Sans" font-size="23.3" fill="#666666" text-anchor="end" transform="translate(2568.0,1378) rotate(-32)">1:20:48 p.m.</text>
<text x="0" y="0" font-family="Liberation Sans" font-size="23.3" fill="#666666" text-anchor="end" transform="translate(2630.0,1378) rotate(-32)">1:21:00 p.m.</text>
<text x="0" y="0" font-family="Liberation Sans" font-size="23.3" fill="#666666" text-anchor="end" transform="translate(2692.0,1378) rotate(-32)">1:21:12 p.m.</text>
<text x="0" y="0" font-family="Liberation Sans" font-size="23.3" fill="#666666" text-anchor="end" transform="translate(2754.0,1378) rotate(-32)">1:21:24 p.m.</text>
<text x="0" y="0" font-family="Liberation Sans" font-size="23.3" fill="#666666" text-anchor="end" transform="translate(2816.5,1378) rotate(-32)">1:21:36 p.m.</text>
<text x="0" y="0" font-family="Liberation Sans" font-size="23.3" fill="#666666" text-anchor="end" transform="translate(2879.0,1378) rotate(-32)">1:21:48 p.m.</text>
<text x="0" y="0" font-family="Liberation Sans" font-size="23.3" fill="#666666" text-anchor="end" transform="translate(2941.0,1378) rotate(-32)">1:22:00 p.m.</text>
<text x="0" y="0" font-family="Liberation Sans" font-size="23.3" fill="#666666" text-anchor="end" transform="translate(3003.2,1378) rotate(-32)">1:22:12 p.m.</text>
<text x="0" y="0" font-family="Liberation Sans" font-size="23.3" fill="#666666" text-anchor="end" transform="translate(3065.6,1378) rotate(-32)">1:22:24 p.m.</text>
<text x="0" y="0" font-family="Liberation Sans" font-size="23.3" fill="#666666" text-anchor="end" transform="translate(3127.8,1378) rotate(-32)">1:22:36 p.m.</text>
<text x="0" y="0" font-family="Liberation Sans" font-size="23.3" fill="#666666" text-anchor="end" transform="translate(3190.2,1378) rotate(-32)">1:22:48 p.m.</text>
<text x="0" y="0" font-family="Liberation Sans" font-size="23.3" fill="#666666" text-anchor="end" transform="translate(3252.0,1378) rotate(-32)">1:23:00 p.m.</text>
<text x="0" y="0" font-family="Liberation Sans" font-size="23.3" fill="#666666" text-anchor="end" transform="translate(3314.6,1378) rotate(-32)">1:23:12 p.m.</text>
<line x1="2642" y1="1227.4" x2="3310.4" y2="1335.2" stroke="#4b3fdb" stroke-width="5.6"/>
<circle cx="2491.3" cy="1227.4" r="3.7" fill="#ffffff" stroke="#4b3fdb" stroke-width="4"/>
<circle cx="2642" cy="1227.4" r="3.7" fill="#ffffff" stroke="#4b3fdb" stroke-width="4"/>
<circle cx="3310.4" cy="1335.2" r="3.7" fill="#ffffff" stroke="#4b3fdb" stroke-width="4"/>
<path d="M3315,1510 Q3328,1510 3328,1497 L3328,1510 Z" fill="#231f1b"/>
<rect x="3328.00" y="0.00" width="6.00" height="1510.00" rx="0" fill="#231f1b" />
<rect x="3326.50" y="0.00" width="1.50" height="116.00" rx="0" fill="#3c3834" />
<rect x="3329.00" y="634.00" width="5.00" height="48.00" rx="0" fill="#5c5a58" />
<rect x="3329.00" y="700.00" width="3.00" height="14.00" rx="0" fill="#8a8886" />
</svg></body></html>
